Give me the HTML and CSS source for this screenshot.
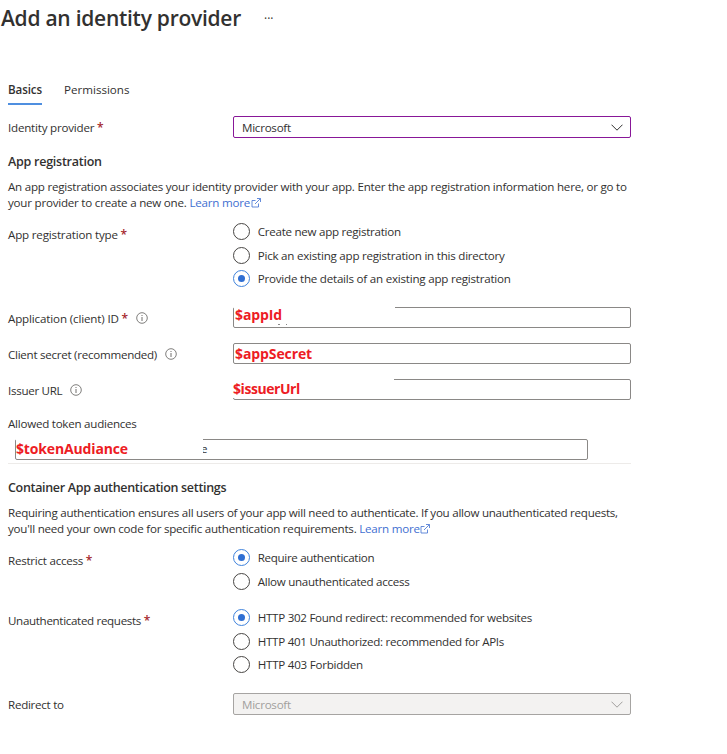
FILE: index.html
```html
<!DOCTYPE html>
<html lang="en">
<head>
<meta charset="utf-8">
<title>Add an identity provider</title>
<link rel="stylesheet" href="styles.css">
</head>
<body>
<svg class="defs" width="0" height="0">
  <symbol id="external" viewBox="0 0 10 10"><path d="M4.500 2.500H1v6.500h6.500V5.500M6 .5h3.500V4M9.300.7 4 6" fill="none" stroke="currentColor" stroke-width=".8"/></symbol>
  <symbol id="info" viewBox="0 0 12 12"><circle cx="6" cy="6" r="5.300" fill="none" stroke="currentColor" stroke-width=".8"/><path d="M6 5v4M6 3v1" stroke="currentColor" stroke-width=".9"/></symbol>
  <symbol id="chevron" viewBox="0 0 12 7"><path d="m.5.7 5.500 5.500L11.500.7" fill="none" stroke="currentColor" stroke-width="1"/></symbol>
</svg>
<main class="page">
  <header class="header"><h1 class="title">Add an identity provider</h1><span class="more">···</span></header>
  <nav class="tabs"><a class="tab active">Basics</a><a class="tab permissions">Permissions</a></nav>

  <div class="row provider-row">
    <span class="label w-provider">Identity provider <b class="star">*</b></span>
    <div class="select focused"><span class="value">Microsoft</span><svg class="chevron"><use href="#chevron"/></svg></div>
  </div>

  <h2 class="heading h-app">App registration</h2>
  <p class="text"><span class="line t1">An app registration associates your identity provider with your app. Enter the app registration information here, or go to</span><span class="line t2">your provider to create a new one. <a class="link">Learn more <svg class="ext"><use href="#external"/></svg></a></span></p>

  <div class="row type-row">
    <span class="label w-type">App registration type <b class="star">*</b></span>
    <div class="radios">
      <label class="radio"><i class="dot"></i><span class="r1">Create new app registration</span></label>
      <label class="radio"><i class="dot"></i><span class="r2">Pick an existing app registration in this directory</span></label>
      <label class="radio"><i class="dot on"></i><span class="r3">Provide the details of an existing app registration</span></label>
    </div>
  </div>

  <div class="row input-row">
    <span class="label w-appid">Application (client) ID <b class="star">*</b></span><svg class="info"><use href="#info"/></svg>
    <div class="input"><span class="mask m-appid"><span class="red v1">$appId</span></span><span class="speck"></span></div>
  </div>
  <div class="row input-row">
    <span class="label w-secret">Client secret (recommended)</span><svg class="info"><use href="#info"/></svg>
    <div class="input"><span class="red v2">$appSecret</span></div>
  </div>
  <div class="row input-row">
    <span class="label w-issuer">Issuer URL</span><svg class="info"><use href="#info"/></svg>
    <div class="input"><span class="mask m-issuer"><span class="red v3">$issuerUrl</span></span></div>
  </div>

  <div class="label w-token token-label">Allowed token audiences</div>
  <div class="input token"><span class="mask m-token"><span class="red v4">$tokenAudiance</span></span><span class="tail">e</span></div>
  <hr class="rule">

  <h2 class="heading h-auth">Container App authentication settings</h2>
  <p class="text"><span class="line t3">Requiring authentication ensures all users of your app will need to authenticate. If you allow unauthenticated requests,</span><span class="line t4">you'll need your own code for specific authentication requirements. <a class="link">Learn more <svg class="ext"><use href="#external"/></svg></a></span></p>

  <div class="row restrict-row">
    <span class="label w-restrict">Restrict access <b class="star">*</b></span>
    <div class="radios">
      <label class="radio"><i class="dot on"></i><span class="r4">Require authentication</span></label>
      <label class="radio"><i class="dot"></i><span class="r5">Allow unauthenticated access</span></label>
    </div>
  </div>
  <div class="row unauth-row">
    <span class="label w-unauth">Unauthenticated requests <b class="star">*</b></span>
    <div class="radios">
      <label class="radio"><i class="dot on"></i><span class="r6">HTTP 302 Found redirect: recommended for websites</span></label>
      <label class="radio"><i class="dot"></i><span class="r7">HTTP 401 Unauthorized: recommended for APIs</span></label>
      <label class="radio"><i class="dot"></i><span class="r8">HTTP 403 Forbidden</span></label>
    </div>
  </div>
  <div class="row redirect-row">
    <span class="label w-redirect">Redirect to</span>
    <div class="select disabled"><span class="value">Microsoft</span><svg class="chevron"><use href="#chevron"/></svg></div>
  </div>
</main>
</body>
</html>
```
FILE: styles.css
```css
* { box-sizing: border-box; }
body { margin: 0; background: #fff; color: #323130; font: 11.6px/16px "Open Sans", "Noto Sans", sans-serif; letter-spacing: -.25px; }
.defs { position: absolute; }
.page { width: 631px; padding-left: 8px; white-space: nowrap; }
.header { display: flex; align-items: center; height: 36px; margin-left: -7px; }
.title { margin: 0; width: 263px; font-size: 21px; line-height: 30px; font-weight: 600; letter-spacing: -.26px; }
.more { font-size: 12px; letter-spacing: 0; padding-top: 2px; }
.tabs { display: flex; gap: 22px; height: 24px; margin-top: 45px; }
.tab { height: 24px; line-height: 17px; letter-spacing: 0; }
.tab.active { width: 34px; line-height: 18px; font-weight: 600; border-bottom: 2px solid #4f8fe0; letter-spacing: -.1px; }
.row { display: flex; align-items: flex-start; }
.label { padding-top: 4px; }
.w-provider { letter-spacing: -.21px; }
.w-type { letter-spacing: -.18px; }
.w-appid { letter-spacing: -.15px; }
.w-secret, .w-redirect { letter-spacing: -.27px; }
.w-issuer { letter-spacing: -.3px; }
.w-unauth { letter-spacing: -.33px; }
.t1, .t4, .r2 { letter-spacing: -.237px; }
.t2, .r3 { letter-spacing: -.225px; }
.t3 { letter-spacing: -.265px; }
.r1 { letter-spacing: -.27px; }
.r4 { letter-spacing: -.33px; }
.r5, .r6, .r7 { letter-spacing: -.285px; }
.star { color: #a4262c; font-weight: 600; font-size: 12px; line-height: 1; }
.select { display: flex; align-items: center; justify-content: space-between; width: 398px; height: 22px; margin-left: auto; padding: 0 7px 0 8px; border: 1px solid #8a8886; border-radius: 2px; }
.value { padding-top: 2px; letter-spacing: -.25px; }
.focused { border-color: #881798; }
.disabled { background: #f3f2f1; color: #a19f9d; border-color: #a6a4a2; }
.chevron { width: 12px; height: 7px; margin-top: 1px; }
.provider-row { margin-top: 11px; }
.heading { margin: 0; font-size: 12.5px; line-height: 18px; font-weight: 600; letter-spacing: -.25px; }
.h-app { margin-top: 15px; }
.text { margin: 8px 0 0; }
.line { display: block; height: 16px; }
.link { color: #3f6fd1; }
.ext { width: 10px; height: 10px; margin-left: -2px; vertical-align: -1px; }
.type-row { margin-top: 12px; height: 72px; }
.radios { width: 398px; margin-left: auto; }
.radio { display: flex; align-items: flex-start; gap: 7.5px; height: 23.5px; padding-left: 0; line-height: 17px; }
.dot { display: grid; place-items: center; width: 17px; height: 17px; border: 1px solid #484644; border-radius: 50%; }
.dot.on { border-color: #3f83dc; }
.dot.on::after { content: ""; width: 7px; height: 7px; border-radius: 50%; background: #2f6fd3; }
.input-row { height: 21px; margin-top: 15px; }
.type-row + .input-row { margin-top: 12px; }
.info { width: 12px; height: 12px; margin: 5px 0 0 8px; color: #605e5c; }
.input { display: flex; width: 398px; height: 21px; margin-left: auto; border: 1px solid #8a8886; border-radius: 2px; position: relative; }
.red { display: block; color: #ed1c24; font: 700 14px/18px "Open Sans", sans-serif; padding-left: 1px; letter-spacing: -.1px; }
.v1 { line-height: 16px; }
.v2 { padding-top: 1px; }
.v3 { padding: 1px 0 0; letter-spacing: -.45px; }
.v4 { padding: 1px 0 0; letter-spacing: -.15px; }
.mask { height: 19px; margin-top: -1px; background: #fff; position: relative; z-index: 1; }
.m-appid { width: 161px; }
.m-issuer { width: 161px; margin-left: -1px; }
.m-token { width: 187px; }
.speck { position: absolute; left: 44px; bottom: 2px; z-index: 2; width: 9px; height: 1px; border: solid #888; border-width: 0 1px 0 2px; }
.token-label { margin-top: 12px; }
.token { width: 573px; margin: 7px 0 0 7px; }
.tail { margin-left: -2px; line-height: 18px; }
.rule { height: 1px; margin: 3px 0 0; border: 0; background: #edebe9; }
.h-auth { margin-top: 15px; letter-spacing: -.32px; }
.restrict-row { margin-top: 12px; }
.unauth-row { margin-top: 13px; }
.redirect-row { margin-top: 13px; }
.radio { padding-left: .5px; }
.radio .dot { margin-left: -.5px; margin-right: .25px; }
```
